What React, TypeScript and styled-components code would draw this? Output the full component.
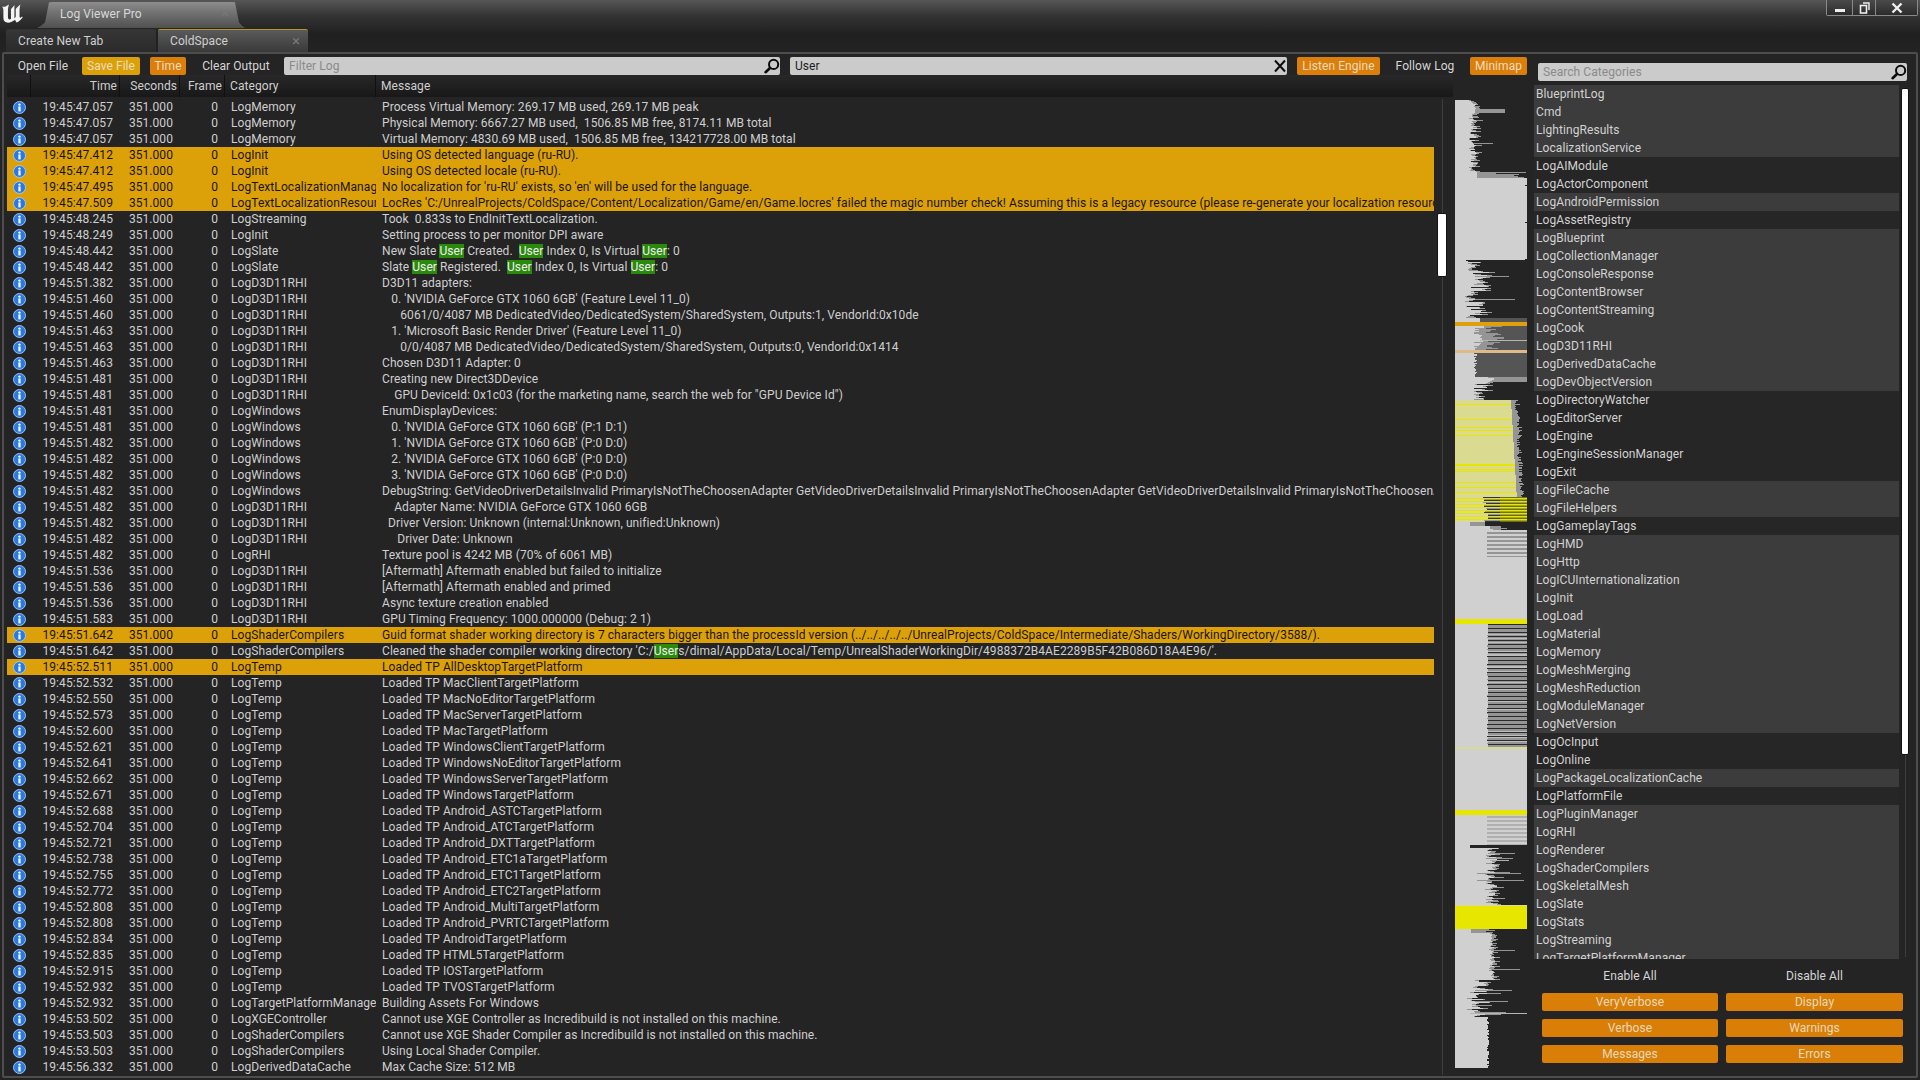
import styled, { createGlobalStyle } from "styled-components";

interface LogRow {
  time: string;
  category: string;
  message: string;
  warn?: boolean;
}

const row = (
  time: string,
  category: string,
  message: string,
  warn?: boolean
): LogRow => ({ time: `19:45:${time}`, category, message, warn });

const RHI = "LogD3D11RHI";
const WIN = "LogWindows";
const TEMP = "LogTemp";
const GPU = "NVIDIA GeForce GTX 1060 6GB";

const LOG_ROWS: LogRow[] = [
  row("47.057", "LogMemory", "Process Virtual Memory: 269.17 MB used, 269.17 MB peak"),
  row("47.057", "LogMemory", "Physical Memory: 6667.27 MB used,  1506.85 MB free, 8174.11 MB total"),
  row("47.057", "LogMemory", "Virtual Memory: 4830.69 MB used,  1506.85 MB free, 134217728.00 MB total"),
  row("47.412", "LogInit", "Using OS detected language (ru-RU).", true),
  row("47.412", "LogInit", "Using OS detected locale (ru-RU).", true),
  row("47.495", "LogTextLocalizationManager", "No localization for 'ru-RU' exists, so 'en' will be used for the language.", true),
  row("47.509", "LogTextLocalizationResource", "LocRes 'C:/UnrealProjects/ColdSpace/Content/Localization/Game/en/Game.locres' failed the magic number check! Assuming this is a legacy resource (please re-generate your localization resource)", true),
  row("48.245", "LogStreaming", "Took  0.833s to EndInitTextLocalization."),
  row("48.249", "LogInit", "Setting process to per monitor DPI aware"),
  row("48.442", "LogSlate", "New Slate User Created.  User Index 0, Is Virtual User: 0"),
  row("48.442", "LogSlate", "Slate User Registered.  User Index 0, Is Virtual User: 0"),
  row("51.382", RHI, "D3D11 adapters:"),
  row("51.460", RHI, `   0. '${GPU}' (Feature Level 11_0)`),
  row("51.460", RHI, "      6061/0/4087 MB DedicatedVideo/DedicatedSystem/SharedSystem, Outputs:1, VendorId:0x10de"),
  row("51.463", RHI, "   1. 'Microsoft Basic Render Driver' (Feature Level 11_0)"),
  row("51.463", RHI, "      0/0/4087 MB DedicatedVideo/DedicatedSystem/SharedSystem, Outputs:0, VendorId:0x1414"),
  row("51.463", RHI, "Chosen D3D11 Adapter: 0"),
  row("51.481", RHI, "Creating new Direct3DDevice"),
  row("51.481", RHI, '    GPU DeviceId: 0x1c03 (for the marketing name, search the web for "GPU Device Id")'),
  row("51.481", WIN, "EnumDisplayDevices:"),
  row("51.481", WIN, `   0. '${GPU}' (P:1 D:1)`),
  row("51.482", WIN, `   1. '${GPU}' (P:0 D:0)`),
  row("51.482", WIN, `   2. '${GPU}' (P:0 D:0)`),
  row("51.482", WIN, `   3. '${GPU}' (P:0 D:0)`),
  row("51.482", WIN, "DebugString: GetVideoDriverDetailsInvalid PrimaryIsNotTheChoosenAdapter GetVideoDriverDetailsInvalid PrimaryIsNotTheChoosenAdapter GetVideoDriverDetailsInvalid PrimaryIsNotTheChoosenAdapter"),
  row("51.482", RHI, `    Adapter Name: ${GPU}`),
  row("51.482", RHI, "  Driver Version: Unknown (internal:Unknown, unified:Unknown)"),
  row("51.482", RHI, "     Driver Date: Unknown"),
  row("51.482", "LogRHI", "Texture pool is 4242 MB (70% of 6061 MB)"),
  row("51.536", RHI, "[Aftermath] Aftermath enabled but failed to initialize"),
  row("51.536", RHI, "[Aftermath] Aftermath enabled and primed"),
  row("51.536", RHI, "Async texture creation enabled"),
  row("51.583", RHI, "GPU Timing Frequency: 1000.000000 (Debug: 2 1)"),
  row("51.642", "LogShaderCompilers", "Guid format shader working directory is 7 characters bigger than the processId version (../../../../../UnrealProjects/ColdSpace/Intermediate/Shaders/WorkingDirectory/3588/).", true),
  row("51.642", "LogShaderCompilers", "Cleaned the shader compiler working directory 'C:/Users/dimal/AppData/Local/Temp/UnrealShaderWorkingDir/4988372B4AE2289B5F42B086D18A4E96/'."),
  row("52.511", TEMP, "Loaded TP AllDesktopTargetPlatform", true),
  row("52.532", TEMP, "Loaded TP MacClientTargetPlatform"),
  row("52.550", TEMP, "Loaded TP MacNoEditorTargetPlatform"),
  row("52.573", TEMP, "Loaded TP MacServerTargetPlatform"),
  row("52.600", TEMP, "Loaded TP MacTargetPlatform"),
  row("52.621", TEMP, "Loaded TP WindowsClientTargetPlatform"),
  row("52.641", TEMP, "Loaded TP WindowsNoEditorTargetPlatform"),
  row("52.662", TEMP, "Loaded TP WindowsServerTargetPlatform"),
  row("52.671", TEMP, "Loaded TP WindowsTargetPlatform"),
  row("52.688", TEMP, "Loaded TP Android_ASTCTargetPlatform"),
  row("52.704", TEMP, "Loaded TP Android_ATCTargetPlatform"),
  row("52.721", TEMP, "Loaded TP Android_DXTTargetPlatform"),
  row("52.738", TEMP, "Loaded TP Android_ETC1aTargetPlatform"),
  row("52.755", TEMP, "Loaded TP Android_ETC1TargetPlatform"),
  row("52.772", TEMP, "Loaded TP Android_ETC2TargetPlatform"),
  row("52.808", TEMP, "Loaded TP Android_MultiTargetPlatform"),
  row("52.808", TEMP, "Loaded TP Android_PVRTCTargetPlatform"),
  row("52.834", TEMP, "Loaded TP AndroidTargetPlatform"),
  row("52.835", TEMP, "Loaded TP HTML5TargetPlatform"),
  row("52.915", TEMP, "Loaded TP IOSTargetPlatform"),
  row("52.932", TEMP, "Loaded TP TVOSTargetPlatform"),
  row("52.932", "LogTargetPlatformManager", "Building Assets For Windows"),
  row("53.502", "LogXGEController", "Cannot use XGE Controller as Incredibuild is not installed on this machine."),
  row("53.503", "LogShaderCompilers", "Cannot use XGE Shader Compiler as Incredibuild is not installed on this machine."),
  row("53.503", "LogShaderCompilers", "Using Local Shader Compiler."),
  row("56.332", "LogDerivedDataCache", "Max Cache Size: 512 MB"),
];

// [name, enabled]
const CATEGORIES: [string, boolean][] = [
  ["BlueprintLog", true],
  ["Cmd", true],
  ["LightingResults", true],
  ["LocalizationService", true],
  ["LogAIModule", false],
  ["LogActorComponent", false],
  ["LogAndroidPermission", true],
  ["LogAssetRegistry", false],
  ["LogBlueprint", true],
  ["LogCollectionManager", true],
  ["LogConsoleResponse", true],
  ["LogContentBrowser", true],
  ["LogContentStreaming", true],
  ["LogCook", true],
  ["LogD3D11RHI", true],
  ["LogDerivedDataCache", true],
  ["LogDevObjectVersion", true],
  ["LogDirectoryWatcher", false],
  ["LogEditorServer", false],
  ["LogEngine", false],
  ["LogEngineSessionManager", false],
  ["LogExit", false],
  ["LogFileCache", true],
  ["LogFileHelpers", true],
  ["LogGameplayTags", false],
  ["LogHMD", true],
  ["LogHttp", true],
  ["LogICUInternationalization", true],
  ["LogInit", true],
  ["LogLoad", true],
  ["LogMaterial", true],
  ["LogMemory", true],
  ["LogMeshMerging", true],
  ["LogMeshReduction", true],
  ["LogModuleManager", true],
  ["LogNetVersion", true],
  ["LogOcInput", false],
  ["LogOnline", false],
  ["LogPackageLocalizationCache", true],
  ["LogPlatformFile", false],
  ["LogPluginManager", true],
  ["LogRHI", true],
  ["LogRenderer", true],
  ["LogShaderCompilers", true],
  ["LogSkeletalMesh", true],
  ["LogSlate", true],
  ["LogStats", true],
  ["LogStreaming", true],
  ["LogTargetPlatformManager", true],
];

const VERBOSITY = ["VeryVerbose", "Display", "Verbose", "Warnings", "Messages", "Errors"];

const LIGHT = "#d0d0d0";
const GRAY = "#959595";
const DIM = "#555555";
const YELLOW = "#e6e600";
const PALE = "#dada90";
const OLIVE = "#a5a51e";

type Bar = [number, string];

// one 1px line of the minimap: colour stops running left to right
function minimapLine(y: number, rnd: () => number): Bar[] {
  const jag = (min: number, max: number) => min + rnd() * (max - min);
  const jagged = (min: number, max: number, longChance: number, longMax: number): Bar[] => {
    const base = jag(min, max);
    const extra = rnd() < longChance ? jag(base, longMax) : base + jag(0, 6);
    return [[base, LIGHT], [extra, GRAY]];
  };

  if (y < 172) return y > 108 && y < 113 ? [[20, LIGHT], [50, GRAY]] : jagged(14, 22, 0.08, 40);
  if (y < 178) return [[22, LIGHT], [jag(40, 72), GRAY]];
  if (y < 260) return [[y % 37 === 0 ? 70 : 72, LIGHT]];
  if (y < 318) return y % 23 === 0 ? [[20, LIGHT], [jag(45, 66), GRAY]] : jagged(10, 34, 0.1, 48);
  if (y < 322) return [[25, LIGHT], [72, DIM]];
  if (y < 326) return [[72, "#dfa00b"]];
  if (y < 350) return y === 340 ? [[25, LIGHT], [72, "#b5b5b5"]] : [[jag(18, 30), LIGHT], [jag(30, 50), GRAY], [72, DIM]];
  if (y < 353) return [[72, "#dfb98a"]];
  if (y < 377) return [[jag(19, 22), LIGHT], [72, DIM]];
  if (y < 400) return y < 382 ? [[jag(30, 40), LIGHT], [72, GRAY]] : jagged(14, 36, 0.12, 50);
  if (y < 497) {
    const base = 56 + (y - 400) * 0.06;
    if (rnd() < 0.12) return [[base, YELLOW], [jag(63, 68), GRAY]];
    return [[base, PALE], [base + jag(3, 8), GRAY]];
  }
  if (y < 522) {
    if (y % 3 === 0) return [[72, YELLOW]];
    if (y % 3 === 1) return [[jag(28, 35), PALE], [45, GRAY], [72, OLIVE]];
    return [[jag(28, 34), PALE], [45, "#333333"], [72, "#6e6e14"]];
  }
  if (y < 526) return [[15, LIGHT], [30, GRAY]];
  if (y < 530) return [[jag(28, 40), LIGHT], [jag(40, 54), GRAY]];
  if (y < 557) return y % 4 < 2 ? [[32, LIGHT], [72, GRAY]] : [[72, LIGHT]];
  if (y < 619) return [[72, LIGHT]];
  if (y < 624) return [[72, YELLOW]];
  if (y < 747) {
    const base = jag(32, 33.5);
    if (y % 4 === 0) return [[base, LIGHT], [72, "#2a2a2a"]];
    return [[base, LIGHT], [72, rnd() < 0.15 ? "#bdbdbd" : GRAY]];
  }
  if (y < 749) return [[72, PALE]];
  if (y < 810) return [[72, LIGHT]];
  if (y < 815) return [[72, YELLOW]];
  if (y < 845) return y % 4 < 2 ? [[32, LIGHT], [72, "#b0b0b0"]] : [[72, LIGHT]];
  if (y < 848) return [[15, LIGHT]];
  if (y < 905) {
    if (y === 860) return [[35, LIGHT], [54, "#b0b0b0"]];
    if (y === 873 || y === 880) return [[22, LIGHT], [jag(50, 70), GRAY]];
    return jagged(30, 44, 0.15, 62);
  }
  if (y < 906) return [[72, PALE]];
  if (y < 929) return [[72, YELLOW]];
  if (y < 933) return [[16, LIGHT], [jag(28, 40), GRAY]];
  if (y < 980) return y % 19 === 0 ? [[36, LIGHT], [jag(50, 72), GRAY]] : jagged(34, 40, 0.06, 50);
  if (y === 1013) return [[15, LIGHT], [72, "#b5b5b5"]];
  if (y < 1017) return y % 11 === 0 ? [[20, LIGHT], [jag(40, 58), GRAY]] : jagged(12, 34, 0.12, 48);
  return [[jag(32, 34), LIGHT]];
}

function Minimap() {
  let seed = 7;
  const rnd = () => {
    seed = (seed * 16807) % 2147483647;
    return seed / 2147483647;
  };

  const rects = [];
  for (let y = 100; y < 1068; y++) {
    let x = 0;
    for (const [end, color] of minimapLine(y, rnd)) {
      if (end > x) {
        rects.push(<rect key={`${y}-${x}`} x={x} y={y - 100} width={end - x} height={1} fill={color} />);
        x = end;
      }
    }
  }

  return (
    <MinimapSvg viewBox="0 0 72 968" shapeRendering="crispEdges">
      {rects}
    </MinimapSvg>
  );
}

function EngineLogo() {
  return (
    <LogoSvg viewBox="0 0 24 20">
      <path
        fill="#f4f4f4"
        d="M0.6 2.4 C3 4 5.4 2 8.4 0.4 C7.6 2 7.2 4.4 7.2 8 L7.2 13 C7.2 15.4 7.8 16.2 8.8 16.2 C9.4 16.2 9.8 16 10.4 15.4 L10.4 5.2 C11.6 4.2 12.6 3 14 1 L14 15 C14.8 14.6 15.2 14 15.4 13.2 L15.4 5.4 C16.4 3.8 18 2.2 20.4 0.4 C19.6 2.6 19.4 4.6 19.4 8 L19.4 13 C19.4 14.8 20.4 15 22 13.2 L22.8 14 C21 16.6 18.6 18.6 16.4 19.6 C15.4 18.4 15 17.6 14.8 16.6 C12.6 18.4 9.4 19.8 6.4 19.6 C3.6 19.3 2.4 17.6 2.4 14.6 L2.4 6.6 C2.4 4.8 1.8 3.4 0.6 2.4 Z"
      />
    </LogoSvg>
  );
}

function InfoIcon() {
  return (
    <svg width="13" height="13" viewBox="0 0 13 13">
      <circle cx="6.5" cy="6.5" r="6" fill="#2a79e0" stroke="#a9cdf5" strokeWidth="0.9" />
      <circle cx="6.5" cy="3.6" r="1.2" fill="#fff" />
      <rect x="5.4" y="5.4" width="2.2" height="5" fill="#fff" />
    </svg>
  );
}

function SearchIcon() {
  return (
    <svg width="16" height="16" viewBox="0 0 16 16" fill="none" stroke="#0c0c0c">
      <circle cx="9.6" cy="6.4" r="4.6" strokeWidth="2" />
      <path d="M6 10 L1.6 14.2" strokeWidth="2.6" strokeLinecap="round" />
    </svg>
  );
}

function ClearIcon() {
  return (
    <svg width="14" height="14" viewBox="0 0 14 14" fill="none" stroke="#0c0c0c" strokeWidth="2">
      <path d="M2 1.5 L12 12.5 M12 1.5 L2 12.5" />
    </svg>
  );
}

function Message({ text }: { text: string }) {
  const parts = text.split("User");
  return (
    <MessageCell>
      {parts.map((part, i) => (
        <span key={i}>
          {i > 0 && <Match>User</Match>}
          {part}
        </span>
      ))}
    </MessageCell>
  );
}

export default function App() {
  return (
    <Window>
      <GlobalStyle />
      <TitleBar>
        <EngineLogo />
        <MajorTab>
          <span>Log Viewer Pro</span>
          <TabClose>×</TabClose>
        </MajorTab>
        <WindowButtons>
          <WindowButton $w={25}>
            <svg width="10" height="10" viewBox="0 0 10 10"><rect x="0" y="6" width="10" height="3" fill="#eee" /></svg>
          </WindowButton>
          <WindowButton $w={23}>
            <svg width="11" height="12" viewBox="0 0 11 12" fill="none" stroke="#eee">
              <rect x="1.5" y="3.5" width="6" height="7.5" strokeWidth="1.6" />
              <path d="M4 1 H10 V8" strokeWidth="1.4" />
            </svg>
          </WindowButton>
          <WindowButton $w={42}>
            <svg width="12" height="12" viewBox="0 0 12 12" fill="none" stroke="#eee" strokeWidth="2.4">
              <path d="M1.5 1.5 L10.5 10.5 M10.5 1.5 L1.5 10.5" />
            </svg>
          </WindowButton>
        </WindowButtons>
      </TitleBar>

      <TabStrip>
        <MinorTab>Create New Tab</MinorTab>
        <MinorTab $active>
          ColdSpace
          <TabClose>×</TabClose>
        </MinorTab>
      </TabStrip>

      <Panel>
        <Main>
          <Toolbar>
            <ToolButton $w={78} $after={0}>Open File</ToolButton>
            <ToolButton $w={58} $fill="#dca108" $after={10}>Save File</ToolButton>
            <ToolButton $w={36} $fill="#dc7f0a" $after={2}>Time</ToolButton>
            <ToolButton $w={96} $after={0}>Clear Output</ToolButton>
            <SearchBox $w={496} $after={10}>
              <Placeholder>Filter Log</Placeholder>
              <SearchIcon />
            </SearchBox>
            <SearchBox $w={497} $after={10}>
              <Typed>User</Typed>
              <ClearIcon />
            </SearchBox>
            <ToolButton $w={83} $fill="#dc7f0a" $after={0}>Listen Engine</ToolButton>
            <ToolButton $w={90} $after={0}>Follow Log</ToolButton>
            <ToolButton $w={57} $fill="#dc7f0a" $after={0}>Minimap</ToolButton>
          </Toolbar>

          <Content>
            <LogPane>
              <HeaderRow>
                <HeaderCell />
                <HeaderCell $right>Time</HeaderCell>
                <HeaderCell $right>Seconds</HeaderCell>
                <HeaderCell $right>Frame</HeaderCell>
                <HeaderCell>Category</HeaderCell>
                <HeaderCell>Message</HeaderCell>
              </HeaderRow>
              <LogBody>
                <Rows>
                  {LOG_ROWS.map((r, i) => (
                    <Row key={i} $warn={r.warn}>
                      <IconCell>
                        <InfoIcon />
                      </IconCell>
                      <TimeCell>{r.time}</TimeCell>
                      <TimeCell>351.000</TimeCell>
                      <TimeCell>0</TimeCell>
                      <CategoryCell>{r.category}</CategoryCell>
                      <Message text={r.message} />
                    </Row>
                  ))}
                </Rows>
                <ScrollTrack>
                  <ScrollThumb />
                </ScrollTrack>
              </LogBody>
            </LogPane>
            <Minimap />
          </Content>
        </Main>

        <SidePane>
          <SearchBox $w={369} $inset>
            <Placeholder>Search Categories</Placeholder>
            <SearchIcon />
          </SearchBox>
          <CategoryArea>
            <CategoryList>
              {CATEGORIES.map(([name, enabled]) => (
                <CategoryItem key={name} $on={enabled}>{name}</CategoryItem>
              ))}
            </CategoryList>
            <SideScroll>
              <SideThumb />
            </SideScroll>
          </CategoryArea>
          <FilterGrid>
            <PlainAction>Enable All</PlainAction>
            <PlainAction>Disable All</PlainAction>
            {VERBOSITY.map((v) => (
              <VerbosityButton key={v}>{v}</VerbosityButton>
            ))}
          </FilterGrid>
        </SidePane>
      </Panel>
    </Window>
  );
}

const GlobalStyle = createGlobalStyle`
  html, body {
    margin: 0;
    padding: 0;
    background: #222;
  }

  * {
    box-sizing: border-box;
  }
`;

const Window = styled.div`
  width: 1920px;
  height: 1080px;
  overflow: hidden;
  display: flex;
  flex-direction: column;
  font-family: Roboto, "Liberation Sans", sans-serif;
  font-size: 12px;
  letter-spacing: 0.07px;
  color: #cfcfcf;
  background: linear-gradient(#565656 0, #333 16px, #202020 34px, #232323 52px);
`;

const TitleBar = styled.div`
  height: 29px;
  flex: none;
  display: flex;
  align-items: flex-start;
`;

const LogoSvg = styled.svg`
  width: 25px;
  height: 19px;
  margin: 4px 12px 0 0;
  flex: none;
`;

const MajorTab = styled.div`
  width: 208px;
  height: 28px;
  padding: 0 16px 1px 23px;
  display: flex;
  align-items: center;
  justify-content: space-between;
  color: #d8d8d8;
  background: linear-gradient(#939393 0, #757575 40%, #505050 100%);
  clip-path: polygon(0 100%, 4px 92%, 8px 80%, 12px 8%, 16px 2px, 195px 2px, 198px 8%, 202px 80%, 205px 92%, 100% 100%);
`;

const TabClose = styled.span`
  color: #777;
  font-size: 15px;
  line-height: 1;
`;

const WindowButtons = styled.div`
  margin-left: auto;
  margin-right: 2px;
  display: flex;
  height: 16px;
  border: 1px solid #8a8a8a;
  border-top: 0;
  border-radius: 0 0 2px 2px;
`;

const WindowButton = styled.div<{ $w: number }>`
  width: ${(props) => props.$w}px;
  display: flex;
  align-items: center;
  justify-content: center;
  background: linear-gradient(#4a4a4a, #2c2c2c);

  & + & {
    border-left: 1px solid #8a8a8a;
  }
`;

const TabStrip = styled.div`
  height: 23px;
  flex: none;
  padding-left: 6px;
  display: flex;
  gap: 2px;
`;

const MinorTab = styled.div<{ $active?: boolean }>`
  width: 150px;
  padding: 0 8px 0 12px;
  display: flex;
  align-items: center;
  justify-content: space-between;
  border-radius: 2px 2px 0 0;
  background: ${(props) =>
    props.$active ? "linear-gradient(#5a5a5a, #3a3a3a)" : "linear-gradient(#363636, #2b2b2b)"};
  border-top: ${(props) => (props.$active ? "1px solid #b5962d" : "1px solid #333")};
`;

const Panel = styled.div`
  height: 1026px;
  margin: 0 2px;
  flex: none;
  display: flex;
  border: 2px solid #4d4d4d;
  border-radius: 2px;
  background: #242424;
`;

const Main = styled.div`
  width: 1530px;
  flex: none;
  display: flex;
  flex-direction: column;
`;

const Toolbar = styled.div`
  height: 18px;
  margin-top: 3px;
  flex: none;
  display: flex;
`;

const ToolButton = styled.div<{ $w: number; $fill?: string; $after: number }>`
  width: ${(props) => props.$w}px;
  height: 18px;
  margin-right: ${(props) => props.$after}px;
  display: flex;
  align-items: center;
  justify-content: center;
  border-radius: 2px;
  background: ${(props) => props.$fill ?? "transparent"};
  color: ${(props) => (props.$fill ? "#ecdcc0" : "#d6d6d6")};
  white-space: nowrap;
`;

const SearchBox = styled.div<{ $w: number; $inset?: boolean; $after?: number }>`
  width: ${(props) => props.$w}px;
  height: 18px;
  flex: none;
  margin-left: ${(props) => (props.$inset ? "4px" : "0")};
  margin-right: ${(props) => props.$after ?? 0}px;
  padding: 0 0 0 5px;
  display: flex;
  align-items: center;
  justify-content: space-between;
  border-radius: 2px;
  background: #cbcbcb;
`;

const Placeholder = styled.span`
  color: #8a8a8a;
`;

const Typed = styled.span`
  color: #1c1c1c;
`;

const Content = styled.div`
  flex: 1;
  min-height: 0;
  display: flex;
`;

const LogPane = styled.div`
  width: 1446px;
  margin-left: 3px;
  margin-right: -3px;
  flex: none;
  display: flex;
  flex-direction: column;
`;

const COLUMNS = "24px 89px 60px 45px 151px 1fr";

const HeaderRow = styled.div`
  height: 22px;
  flex: none;
  display: grid;
  grid-template-columns: ${COLUMNS};
  background: linear-gradient(#282828, #181818);
`;

const HeaderCell = styled.div<{ $right?: boolean }>`
  display: flex;
  align-items: center;
  justify-content: ${(props) => (props.$right ? "flex-end" : "flex-start")};
  padding: 0 ${(props) => (props.$right ? "2px" : "5px")};
  border-right: 1px solid #101010;

  &:last-child {
    border-right: 0;
  }
`;

const LogBody = styled.div`
  flex: 1;
  min-height: 0;
  margin-top: 2px;
  margin-bottom: 1px;
  display: flex;
  overflow: hidden;
`;

const Rows = styled.div`
  width: 1427px;
  flex: none;
  overflow: hidden;
`;

const Row = styled.div<{ $warn?: boolean }>`
  height: 16px;
  display: grid;
  grid-template-columns: ${COLUMNS};
  align-items: center;
  line-height: 16px;
  background: ${(props) => (props.$warn ? "#dca108" : "transparent")};
  color: ${(props) => (props.$warn ? "#1a1408" : "#cfcfcf")};
`;

const IconCell = styled.div`
  height: 16px;
  display: flex;
  align-items: center;
  justify-content: center;
`;

const TimeCell = styled.div`
  padding-right: 7px;
  text-align: right;
`;

const CategoryCell = styled.div`
  padding: 0 2px 0 6px;
  overflow: hidden;
  white-space: nowrap;
`;

const MessageCell = styled.div`
  padding: 0 4px 0 6px;
  overflow: hidden;
  white-space: pre;
`;

const Match = styled.span`
  background: #2a8a0c;
  color: #f2f2f2;
`;

const ScrollTrack = styled.div`
  position: relative;
  flex: 1;

  &::before {
    content: "";
    position: absolute;
    left: 8px;
    top: 0;
    bottom: 0;
    width: 1px;
    background: #3d3d3d;
  }
`;

const ScrollThumb = styled.div`
  position: absolute;
  left: 3px;
  top: 114px;
  width: 10px;
  height: 64px;
  background: #fff;
  border: 1px solid #111;
  border-radius: 2px;
`;

const MinimapSvg = styled.svg`
  width: 72px;
  height: 968px;
  margin: 25px 0 0 5px;
  flex: none;
`;

const SidePane = styled.div`
  flex: 1;
  min-width: 0;
  padding-top: 9px;
  display: flex;
  flex-direction: column;
  gap: 4px;
`;

const CategoryArea = styled.div`
  height: 874px;
  flex: none;
  display: flex;
`;

const CategoryList = styled.div`
  width: 365px;
  flex: none;
  overflow: hidden;
`;

const CategoryItem = styled.div<{ $on: boolean }>`
  height: 18px;
  padding-left: 2px;
  display: flex;
  align-items: center;
  color: #d2d2d2;
  background: ${(props) => (props.$on ? "#3c3c3c" : "#262626")};
`;

const SideScroll = styled.div`
  position: relative;
  flex: 1;

  &::before {
    content: "";
    position: absolute;
    left: 6px;
    top: 3px;
    bottom: 2px;
    width: 1px;
    background: #3d3d3d;
  }
`;

const SideThumb = styled.div`
  position: absolute;
  left: 2px;
  top: 3px;
  width: 8px;
  height: 667px;
  background: #fff;
  border: 1px solid #111;
  border-radius: 2px;
`;

const FilterGrid = styled.div`
  margin-top: 4px;
  padding-left: 8px;
  display: grid;
  grid-template-columns: 176px 177px;
  grid-auto-rows: 18px;
  column-gap: 8px;
  row-gap: 8px;
`;

const PlainAction = styled.div`
  display: flex;
  align-items: center;
  justify-content: center;
  color: #d6d6d6;
`;

const VerbosityButton = styled.div`
  display: flex;
  align-items: center;
  justify-content: center;
  border-radius: 2px;
  background: #d97f08;
  color: #ecd9b8;
`;
